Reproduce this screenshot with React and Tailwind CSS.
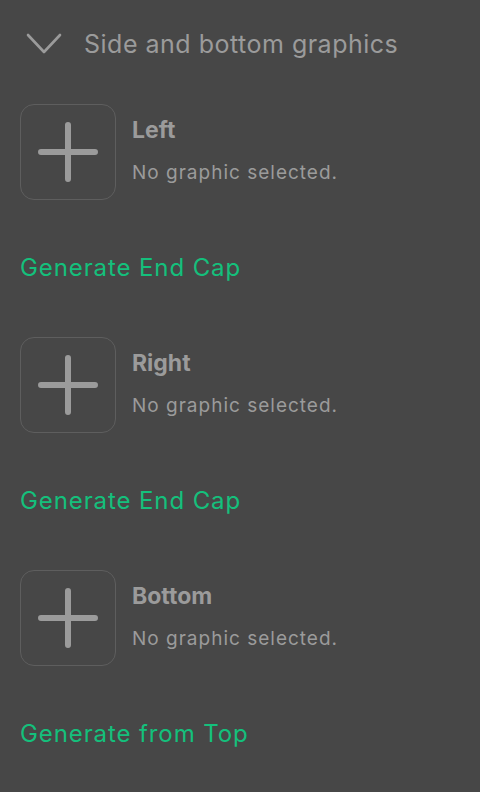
const slots = [
  { name: "Left", action: "Generate End Cap" },
  { name: "Right", action: "Generate End Cap" },
  { name: "Bottom", action: "Generate from Top" },
];

function Slot({ name, action }) {
  return (
    <div className="flex flex-col">
      <div className="flex items-start">
        <button className="w-[96px] h-[96px] shrink-0 rounded-[14px] border-[1.5px] border-[#5e5e5e] flex items-center justify-center">
          <svg width="60" height="60" viewBox="0 0 60 60" fill="none" stroke="#9b9b9b" strokeWidth="6" strokeLinecap="round">
            <path d="M30 3v54M3 30h54" />
          </svg>
        </button>
        <div className="ml-4 pt-[12px] flex flex-col">
          <span className="text-[23px] leading-[28px] font-bold text-[#9b9b9b]">{name}</span>
          <span className="mt-[17px] text-[19px] leading-[24px] tracking-[1px] text-[#9b9b9b]">No graphic selected.</span>
        </div>
      </div>
      <button className="mt-[53px] text-left text-[24px] leading-[30px] tracking-[0.9px] text-[#14c07c]">{action}</button>
    </div>
  );
}

export default function App() {
  return (
    <div className="w-[480px] h-[792px] bg-[#474747] px-5 overflow-hidden" style={{ fontFamily: "Inter, sans-serif" }}>
      <div className="flex items-center pt-[26px] h-[62px]">
        <svg className="ml-[6px]" width="36" height="22" viewBox="0 0 36 22" fill="none" stroke="#9b9b9b" strokeWidth="2.6" strokeLinecap="round" strokeLinejoin="round">
          <path d="M2 2l16 17L34 2" />
        </svg>
        <span className="ml-[22px] text-[25px] leading-[36px] tracking-[0.5px] text-[#9b9b9b]">Side and bottom graphics</span>
      </div>
      <div className="mt-[42px] flex flex-col gap-[54px]">
        {slots.map((s) => (
          <Slot key={s.name} {...s} />
        ))}
      </div>
    </div>
  );
}
